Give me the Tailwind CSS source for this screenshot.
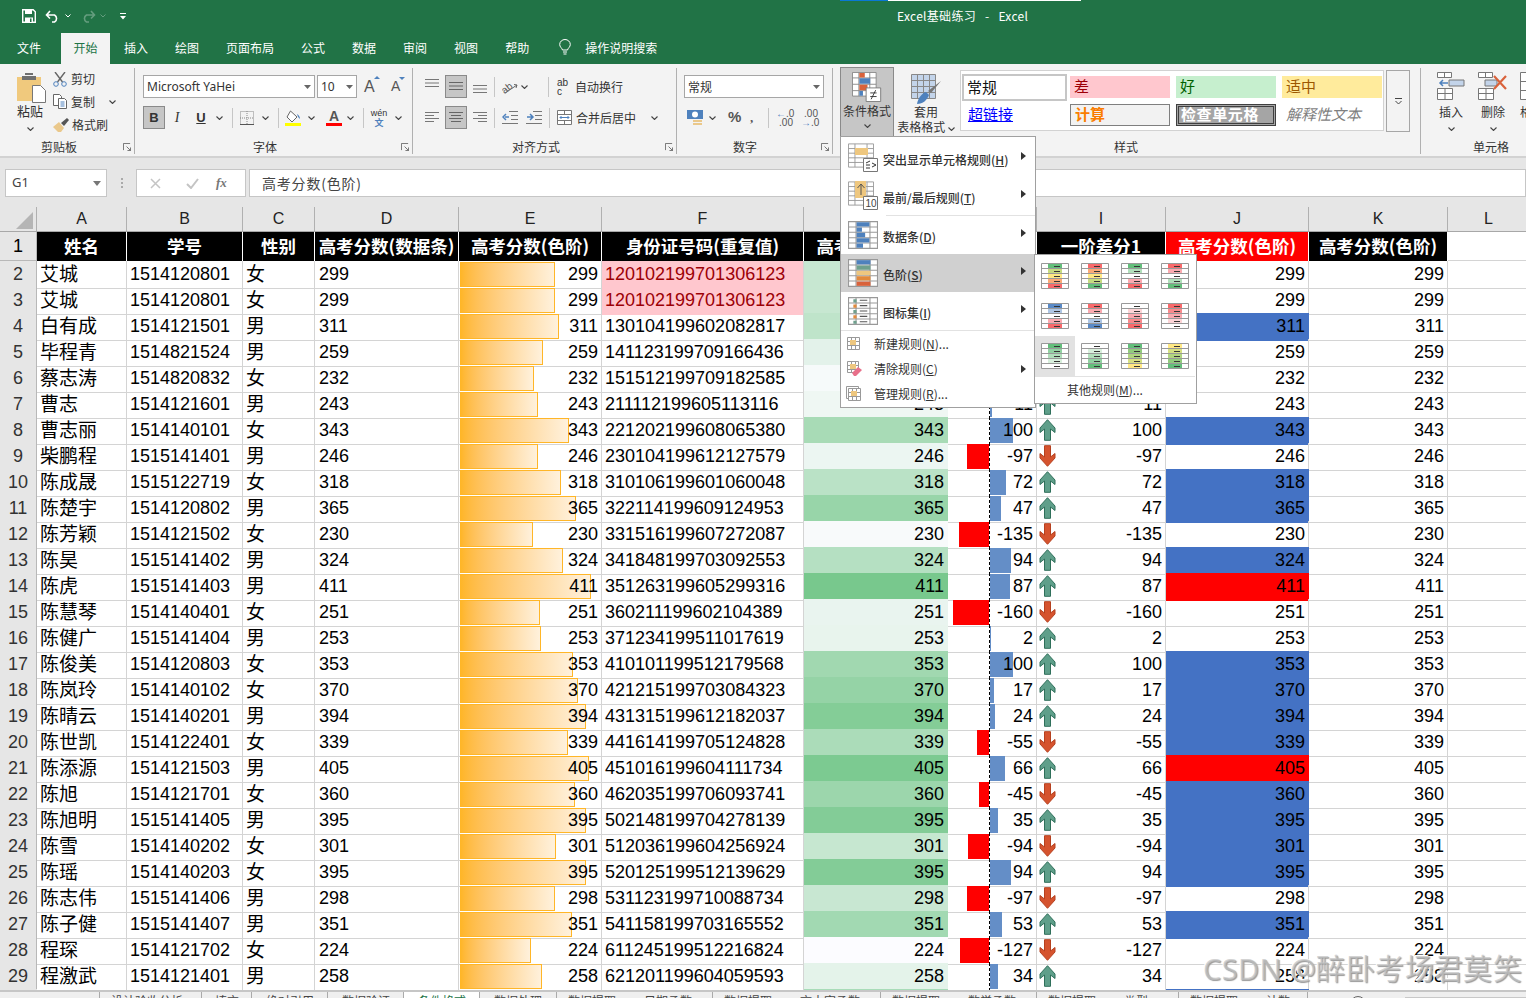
<!DOCTYPE html>
<html lang="zh-CN">

<head>
  <meta charset="UTF-8" />
  <meta name="viewport" content="width=device-width, initial-scale=1.0" />
  <script src="https://cdn.jsdelivr.net/npm/@tailwindcss/browser@4"></script>
  <title>Excel基础练习 - Excel</title>
</head>

<body class="relative w-[1526px] h-[998px] overflow-hidden bg-white text-[12px] text-[#333] font-['Noto_Sans_CJK_SC',sans-serif]">
  <!-- shared small icons -->
  <svg class="hidden">
    <symbol id="chev" viewBox="0 0 7 4"><path d="M.5.5 3.5 3.5 6.5.5" fill="none" stroke="#444" stroke-width="1.1" /></symbol>
    <symbol id="launcher" viewBox="0 0 9 9"><path d="M.5 8V.5H8M4 4l4.500 4.500M8.500 5v3.500H5" fill="none" stroke="#666" /></symbol>
    <symbol id="tri" viewBox="0 0 5 8"><path d="M0 0l5 4-5 4z" fill="#333" /></symbol>
    <symbol id="grid" viewBox="0 0 28 26"><path d="M.5.5h27v25H.5zM.5 5.500h27M.5 10.500h27M.5 15.500h27M.5 20.500h27M7.500.5v25M20.500.5v25" fill="#fff" stroke="#999" /></symbol>
    <symbol id="upa" viewBox="0 0 16 22"><path d="M8 .7l7.500 8.300v4.500L11 10v11.300H5V10L.5 13.500V9z" fill="#5f9f8a" stroke="#2f6f5a" /></symbol>
    <symbol id="downa" viewBox="0 0 16 22"><path d="M5 .7h6V12l4.500-3.500V13L8 21.300.5 13V8.500L5 12z" fill="#d5532e" stroke="#b5401f" /></symbol>
  </svg>

  <!-- Title bar -->
  <header class="bg-[#217346] h-[64px] text-white">
    <div class="flex items-center h-[33px] pb-px">
      <div class="flex items-center w-[897px] pl-[22px]">
        <svg width="14" height="14" viewBox="0 0 14 14"><path d="M.7.7h10.500l2.100 2.100v10.500H.7z" fill="none" stroke="#fff" stroke-width="1.400" /><path d="M3 1h7v4H3zM3 8.500h8V13H3z" fill="#fff" /><path d="M8 9.500h1.500V13H8z" fill="#217346" /></svg>
        <svg class="ml-[9px]" width="16" height="14" viewBox="0 0 16 14"><path d="M1.500 6h8a4 4 0 0 1 0 7H7M5 2 1.500 6 5 9.500" fill="none" stroke="#fff" stroke-width="1.600" /></svg>
        <svg class="ml-[4px]" width="6" height="4"><path d="M.5.5 3 3 5.500.5" stroke="#fff" fill="none" /></svg>
        <svg class="ml-[9px] opacity-30" width="16" height="14" viewBox="0 0 16 14"><path d="M14.500 6h-8a4 4 0 0 0 0 7H9M11 2l3.500 4L11 9.500" fill="none" stroke="#fff" stroke-width="1.600" /></svg>
        <svg class="ml-[4px] opacity-30" width="6" height="4"><path d="M.5.5 3 3 5.500.5" stroke="#fff" fill="none" /></svg>
        <svg class="ml-[14px]" width="6" height="7" viewBox="0 0 6 7"><path d="M0 0h6v1H0zM0 3h6L3 6.500z" fill="#fff" /></svg>
      </div>
      <span class="text-[12px] tracking-[0.3px] whitespace-pre">Excel基础练习   -   Excel</span>
    </div>
    <nav class="flex items-center h-[29px]">
      <a class="ml-[17px]">文件</a>
      <a class="flex items-center justify-center self-start ml-[20px] w-[49px] h-[31px] pb-[2px] bg-[#f3f3f3] text-[#217346]">开始</a>
      <div class="flex items-center ml-[14px] gap-[27px]">
        <a>插入</a><a>绘图</a><a>页面布局</a><a>公式</a><a>数据</a><a>审阅</a><a>视图</a><a>帮助</a>
      </div>
      <svg class="ml-[30px]" width="12" height="17" viewBox="0 0 12 17"><path d="M3.500 11C3 9 .7 8 .7 5.500a5.300 5 0 0 1 10.600 0C11.300 8 9 9 8.500 11zM4 13h4M4.500 15h3" fill="none" stroke="#fff" /></svg>
      <span class="ml-[14px]">操作说明搜索</span>
    </nav>
  </header>

  <!-- Ribbon -->
  <div class="flex h-[94px] pt-[4px] bg-[#f3f3f3] border-b-2 border-[#d2d2d2]">
    <!-- 剪贴板 -->
    <section class="flex flex-col w-[135px] h-[86px] border-r border-[#b0b0b0]">
      <div class="flex h-[70px]">
        <div class="flex flex-col items-start pl-[17px] w-[53px]">
          <svg class="mt-[4px]" width="29" height="31" viewBox="0 0 29 31"><path d="M0 5h24v24H0z" fill="#f0c97d" /><path d="M8 3h8V1h-8zM5 4h14v4H5z" fill="#6f6f6f" /><path d="M15.500 13.500h8l5 5v12h-13z" fill="#fff" stroke="#777" /></svg>
          <span class="text-[13px] leading-[16px]">粘贴</span>
          <svg class="ml-[10px] mt-[8px]" width="7" height="4"><use href="#chev" /></svg>
        </div>
        <div class="flex flex-col">
          <div class="flex items-center h-[22px]">
            <svg width="14" height="15" viewBox="0 0 14 15"><path d="M2 0l7.500 10M12 0 4.500 10" stroke="#666" stroke-width="1.400" fill="none" /><circle cx="3" cy="12" r="2.300" fill="none" stroke="#4e81bd" /><circle cx="11" cy="12" r="2.300" fill="none" stroke="#4e81bd" /></svg>
            <span class="ml-[4px]">剪切</span>
          </div>
          <div class="flex items-center h-[23px]">
            <svg width="14" height="15" viewBox="0 0 14 15"><path d="M.5.5h6l2 2v9H.5z" fill="#fff" stroke="#666" /><path d="M5.500 4.500h6l2 2v8h-8z" fill="#fff" stroke="#666" /><path d="M7.500 8h4M7.500 10h4M7.500 12h4" stroke="#4e81bd" /></svg>
            <span class="ml-[4px]">复制</span>
            <svg class="ml-[14px]" width="7" height="4"><use href="#chev" /></svg>
          </div>
          <div class="flex items-center h-[23px]">
            <svg width="16" height="14" viewBox="0 0 16 14"><path d="M0 9l6-5 5 6-3 4H5z" fill="#eac88b" /><path d="M8 5l6-5 2 2-5 6z" fill="#555" /></svg>
            <span class="ml-[3px]">格式刷</span>
          </div>
        </div>
      </div>
      <div class="flex items-center h-[16px] pt-[2px]">
        <span class="ml-[41px]">剪贴板</span>
        <svg class="ml-auto mr-[3px]" width="8" height="8"><use href="#launcher" /></svg>
      </div>
    </section>

    <!-- 字体 -->
    <section class="flex flex-col w-[278px] h-[86px] border-r border-[#b0b0b0]">
      <div class="h-[70px] pl-[8px] pt-[7px]">
        <div class="flex items-center h-[23px]">
          <div class="flex items-center justify-between w-[172px] h-[23px] px-[3px] bg-white border border-[#a6a6a6] font-['Noto_Sans',sans-serif]">Microsoft YaHei
            <svg width="7" height="4" viewBox="0 0 7 4"><path d="M0 0h7L3.500 4z" fill="#666" /></svg>
          </div>
          <div class="flex items-center justify-between ml-[2px] w-[40px] h-[23px] px-[3px] bg-white border border-[#a6a6a6] font-['Noto_Sans',sans-serif]">10
            <svg width="7" height="4" viewBox="0 0 7 4"><path d="M0 0h7L3.500 4z" fill="#666" /></svg>
          </div>
          <div class="relative ml-[7px] w-[18px] text-[16px] text-[#555] font-['Liberation_Sans']">A<span class="absolute top-[1px] left-[10px] w-0 h-0 border-x-[3px] border-b-[3px] border-x-transparent border-b-[#4e81bd]"></span></div>
          <div class="relative ml-[9px] w-[16px] text-[14px] text-[#555] font-['Liberation_Sans']">A<span class="absolute top-[1px] left-[8px] w-0 h-0 border-x-[3px] border-t-[3px] border-x-transparent border-t-[#4e81bd]"></span></div>
        </div>
        <div class="flex items-center h-[23px] mt-[8px]">
          <div class="flex items-center justify-center w-[22px] h-[23px] bg-[#c6c6c6] border border-[#8a8a8a] font-bold font-['Liberation_Sans'] text-[13px]">B</div>
          <div class="w-[24px] text-center font-['Liberation_Serif'] italic text-[14px]">I</div>
          <div class="w-[24px] text-center font-bold font-['Liberation_Sans'] text-[13px] underline">U</div>
          <div class="flex justify-center w-[12px]"><svg width="7" height="4"><use href="#chev" /></svg></div>
          <div class="ml-[7px] w-px h-[20px] bg-[#c6c6c6]"></div>
          <div class="flex justify-center w-[28px]"><svg width="14" height="14" viewBox="0 0 14 14"><path d="M.5.5h13v13H.5z" fill="none" stroke="#888" stroke-dasharray="1 1" /><path d="M7 0v14M0 7h14" stroke="#888" stroke-dasharray="1 1" /><path d="M0 13.500h14" stroke="#555" /></svg></div>
          <div class="flex justify-center w-[8px]"><svg width="7" height="4"><use href="#chev" /></svg></div>
          <div class="ml-[9px] w-px h-[20px] bg-[#c6c6c6]"></div>
          <div class="flex justify-center w-[28px]"><svg width="16" height="16" viewBox="0 0 16 16"><path d="M5.500 1 12 7l-5 5-5-5z" fill="#fff" stroke="#666" /><path d="M12 4c2 1 3 3 3 5l-2-2z" fill="#4e81bd" /><path d="M0 13h16v3H0z" fill="#ffff00" /></svg></div>
          <div class="flex justify-center w-[8px]"><svg width="7" height="4"><use href="#chev" /></svg></div>
          <div class="flex flex-col items-center ml-[7px] w-[24px] relative">
            <span class="font-bold font-['Liberation_Sans'] text-[14px] leading-[13px] text-[#555]">A</span>
            <span class="w-[16px] h-[3px] bg-[#ff0000]"></span>
          </div>
          <div class="flex justify-center w-[8px]"><svg width="7" height="4"><use href="#chev" /></svg></div>
          <div class="ml-[9px] w-px h-[20px] bg-[#c6c6c6]"></div>
          <div class="flex flex-col items-center w-[30px] text-[9px] leading-[9px] font-['Liberation_Sans']">wén<span class="text-[#4e81bd] font-['Noto_Sans_CJK_SC'] font-bold">文</span></div>
          <div class="flex justify-center w-[8px]"><svg width="7" height="4"><use href="#chev" /></svg></div>
        </div>
      </div>
      <div class="flex items-center h-[16px] pt-[2px]">
        <span class="ml-[118px]">字体</span>
        <svg class="ml-auto mr-[3px]" width="8" height="8"><use href="#launcher" /></svg>
      </div>
    </section>

    <!-- 对齐方式 -->
    <section class="flex flex-col w-[264px] h-[86px] border-r border-[#b0b0b0]">
      <div class="h-[70px] pl-[12px] pt-[7px]">
        <div class="flex items-center h-[23px]">
          <div class="w-[20px]"><svg width="14" height="9" viewBox="0 0 14 9" class="-mt-[6px]"><path d="M0 .5h14M0 4h14M0 7.500h14" stroke="#777" /></svg></div>
          <div class="flex items-center justify-center w-[22px] h-[23px] bg-[#c6c6c6] border border-[#8a8a8a]"><svg width="14" height="9" viewBox="0 0 14 9"><path d="M0 .5h14M0 4h14M0 7.500h14" stroke="#666" /></svg></div>
          <div class="w-[14px] ml-[6px]"><svg width="14" height="9" viewBox="0 0 14 9" class="mt-[6px]"><path d="M0 .5h14M0 4h14M0 7.500h14" stroke="#777" /></svg></div>
          <div class="ml-[7px] w-px h-[20px] bg-[#c6c6c6]"></div>
          <svg class="ml-[7px]" width="16" height="16" viewBox="0 0 16 16"><text x="0" y="12" transform="rotate(-38 6 10)" font-size="10" fill="#555" font-family="Liberation Sans">ab</text><path d="M3 14 15 6M12 5.500l3 .5-1 3" stroke="#666" fill="none" /></svg>
          <svg class="ml-[3px]" width="7" height="4"><use href="#chev" /></svg>
          <div class="ml-[20px] w-px h-[20px] bg-[#c6c6c6]"></div>
          <div class="ml-[8px] w-[14px] text-[10px] leading-[9px] font-['Liberation_Sans']">ab<br />c</div>
          <span class="ml-[4px]">自动换行</span>
        </div>
        <div class="flex items-center h-[23px] mt-[8px]">
          <div class="w-[20px]"><svg width="14" height="11" viewBox="0 0 14 11"><path d="M0 .5h14M0 3.500h9M0 6.500h14M0 9.500h9" stroke="#777" /></svg></div>
          <div class="flex items-center justify-center w-[22px] h-[23px] bg-[#c6c6c6] border border-[#8a8a8a]"><svg width="14" height="11" viewBox="0 0 14 11"><path d="M0 .5h14M2 3.500h10M0 6.500h14M2 9.500h10" stroke="#666" /></svg></div>
          <div class="w-[14px] ml-[6px]"><svg width="14" height="11" viewBox="0 0 14 11"><path d="M0 .5h14M5 3.500h9M0 6.500h14M5 9.500h9" stroke="#777" /></svg></div>
          <div class="ml-[7px] w-px h-[20px] bg-[#c6c6c6]"></div>
          <svg class="ml-[7px]" width="16" height="13" viewBox="0 0 16 13"><path d="M7 .5h9M9 4.500h7M9 8.500h7M0 12.500h16" stroke="#777" /><path d="M7 6H3M4 3 1 6l3 3" stroke="#4e81bd" stroke-width="1.500" fill="none" /></svg>
          <svg class="ml-[8px]" width="16" height="13" viewBox="0 0 16 13"><path d="M7 .5h9M9 4.500h7M9 8.500h7M0 12.500h16" stroke="#777" /><path d="M1 6h5M4 3l3 3-3 3" stroke="#4e81bd" stroke-width="1.500" fill="none" /></svg>
          <div class="ml-[7px] w-px h-[20px] bg-[#c6c6c6]"></div>
          <svg class="ml-[7px]" width="15" height="15" viewBox="0 0 15 15"><path d="M.5.5h14v14H.5zM.5 4.500h14M.5 10.500h14M7.500.5v4M7.500 10.500v4" fill="#fff" stroke="#777" /><path d="M3 7.500h9M4.500 6 3 7.500 4.500 9M10.500 6 12 7.500 10.500 9" stroke="#4e81bd" fill="none" /></svg>
          <span class="ml-[4px]">合并后居中</span>
          <svg class="ml-[15px]" width="7" height="4"><use href="#chev" /></svg>
        </div>
      </div>
      <div class="flex items-center h-[16px] pt-[2px]">
        <span class="ml-[99px]">对齐方式</span>
        <svg class="ml-auto mr-[3px]" width="8" height="8"><use href="#launcher" /></svg>
      </div>
    </section>

    <!-- 数字 -->
    <section class="flex flex-col w-[156px] h-[86px] border-r border-[#b0b0b0]">
      <div class="h-[70px] pl-[7px] pt-[7px]">
        <div class="flex items-center justify-between w-[140px] h-[23px] px-[3px] bg-white border border-[#a6a6a6]">常规
          <svg width="7" height="4" viewBox="0 0 7 4"><path d="M0 0h7L3.500 4z" fill="#666" /></svg>
        </div>
        <div class="flex items-center h-[23px] mt-[8px] text-[#555]">
          <svg class="ml-[3px]" width="16" height="16" viewBox="0 0 16 16"><path d="M0 0h16v9H0z" fill="#4e81bd" /><circle cx="8" cy="4.500" r="3" fill="#fff" /><path d="M6 10h9v2H6zM6 13h9v2H6z" fill="#eac88b" /></svg>
          <svg class="ml-[6px]" width="7" height="4"><use href="#chev" /></svg>
          <span class="ml-[12px] w-[13px] font-bold text-[15px] font-['Liberation_Sans']">%</span>
          <span class="ml-[9px] w-[5px] font-bold text-[13px] font-['Liberation_Serif']">,</span>
          <div class="ml-[13px] w-px h-[20px] bg-[#c6c6c6]"></div>
          <div class="ml-[7px] w-[17px] text-[10px] leading-[9px] font-['Liberation_Sans'] text-right"><span class="text-[#4e81bd]">←</span>.0<br />.00</div>
          <div class="ml-[8px] w-[17px] text-[10px] leading-[9px] font-['Liberation_Sans'] text-right">.00<br /><span class="text-[#4e81bd]">→</span>.0</div>
        </div>
      </div>
      <div class="flex items-center h-[16px] pt-[2px]">
        <span class="ml-[56px]">数字</span>
        <svg class="ml-auto mr-[3px]" width="8" height="8"><use href="#launcher" /></svg>
      </div>
    </section>

    <!-- 样式 -->
    <section class="flex flex-col w-[588px] h-[86px] border-r border-[#b0b0b0]">
      <div class="flex h-[70px] pl-[7px]">
        <div class="flex flex-col items-center w-[54px] h-[70px] -mt-[1px] bg-[#c6c6c6] border border-[#8a8a8a]">
          <svg class="mt-[4px]" width="31" height="30" viewBox="0 0 34 33"><path d="M.5.5h26v26H.5zM.5 6.500h26M.5 13.500h26M.5 20.500h26M7.500.5v26M19.500.5v26" fill="#fff" stroke="#888" /><path d="M8 1h6v5H8zM8 14h9v6H8z" fill="#d9623b" /><path d="M8 7h12v6H8zM8 21h4v5H8z" fill="#4e81bd" /><path d="M15.500 17.500h16v15h-16z" fill="#fff" stroke="#777" /><path d="M20 23h7M20 27h7M26 20l-5 10" stroke="#333" fill="none" /></svg>
          <span class="mt-px leading-[16px]">条件格式</span>
          <svg class="mt-[5px]" width="7" height="4"><use href="#chev" /></svg>
        </div>
        <div class="flex flex-col items-center w-[64px] pt-[6px]">
          <svg width="30" height="30" viewBox="0 0 30 30"><path d="M.5.5h24v24H.5z" fill="#c3d4ea" stroke="#888" /><path d="M.5 6.500h24M.5 12.500h24M.5 18.500h24M6.500.5v24M12.500.5v24M18.500.5v24" stroke="#888" fill="none" /><path d="M30 7 20 19l-3-2z" fill="#777" /><path d="M6 30c1-6 5-11 9-12l3 3c-2 5-6 9-12 9z" fill="#4e81bd" /></svg>
          <span class="leading-[15px]">套用</span>
          <span class="leading-[15px] whitespace-nowrap">表格格式 <svg class="inline" width="7" height="4"><use href="#chev" /></svg></span>
        </div>
        <div class="grid grid-cols-[109px_106px_106px_101px] grid-rows-[32px_24px] content-start items-center w-[424px] h-[61px] ml-[2px] mt-[2px] bg-white border border-[#d2d2d2] text-[15px]">
          <div class="flex items-center h-[27px] ml-[1px] mr-[3px] px-[3px] bg-white border-2 border-[#c6c6c6] text-[#111]">常规</div>
          <div class="flex items-center h-[22px] mr-[6px] px-[4px] pb-[2px] bg-[#ffc7ce] text-[#9c0006]">差</div>
          <div class="flex items-center h-[22px] mr-[6px] px-[4px] pb-[2px] bg-[#c6efce] text-[#006100]">好</div>
          <div class="flex items-center h-[22px] mr-[1px] px-[4px] pb-[2px] bg-[#ffeb9c] text-[#9c5700]">适中</div>
          <div class="pl-[7px] pb-[2px] text-[#0000ff] underline">超链接</div>
          <div class="flex items-center h-[22px] mr-[6px] px-[4px] pb-[2px] bg-[#f2f2f2] border border-[#7f7f7f] text-[#fa7d00] font-bold">计算</div>
          <div class="flex items-center h-[22px] mr-[6px] px-[2px] pb-[2px] bg-[#a5a5a5] border-[3px] border-double border-[#3f3f3f] text-white font-bold tracking-[0.6px]">检查单元格</div>
          <div class="pl-[4px] pb-[2px] text-[#7f7f7f] italic text-[15px]">解释性文本</div>
        </div>
        <div class="flex items-center justify-center ml-[2px] mt-[2px] w-[24px] h-[62px] bg-[#f3f3f3] border border-[#a6a6a6]">
          <svg width="7" height="7" viewBox="0 0 7 7"><path d="M0 .5h7M.5 3l3 3 3-3" fill="none" stroke="#444" /></svg>
        </div>
      </div>
      <div class="flex items-center h-[16px] pt-[2px]">
        <span class="ml-[281px]">样式</span>
      </div>
    </section>

    <!-- 单元格 -->
    <section class="flex flex-col flex-1 h-[86px] overflow-hidden">
      <div class="flex h-[70px] pl-[16px] pt-[4px]">
        <div class="flex flex-col items-center w-[28px]">
          <svg width="28" height="28" viewBox="0 0 28 28"><path d="M.5.5h14v5H.5zM7.500.5v5M.5 16.500h15v11H.5zM.5 21.500h15M8 16.500v11" fill="#fff" stroke="#777" /><path d="M12 8h15v6H12z" fill="#c3d4ea" stroke="#777" /><path d="M11 11H3M6 8l-3 3 3 3" stroke="#4e81bd" stroke-width="1.500" fill="none" /></svg>
          <span class="mt-[3px]">插入</span>
          <svg class="mt-[6px]" width="7" height="4"><use href="#chev" /></svg>
        </div>
        <div class="flex flex-col items-center ml-[13px] w-[30px]">
          <svg width="30" height="28" viewBox="0 0 30 28"><path d="M.5.5h14v5H.5zM7.500.5v5M.5 16.500h15v11H.5zM.5 21.500h15M8 16.500v11" fill="#fff" stroke="#777" /><path d="M7 8h12v6H7z" fill="#c3d4ea" stroke="#777" /><path d="M16 4l12 13M28 4 16 17" stroke="#d9623b" stroke-width="2.200" /></svg>
          <span class="mt-[3px]">删除</span>
          <svg class="mt-[6px]" width="7" height="4"><use href="#chev" /></svg>
        </div>
        <div class="flex flex-col items-start ml-[12px]">
          <svg width="28" height="28" viewBox="0 0 28 28"><path d="M.5.5h14v27H.5zM.5 9.500h14M.5 18.500h14" fill="#fff" stroke="#777" /></svg>
          <span class="mt-[3px]">格</span>
        </div>
      </div>
      <div class="flex items-center h-[16px] pt-[2px]">
        <span class="ml-[52px]">单元格</span>
      </div>
    </section>
  </div>

  <!-- Formula bar -->
  <div class="flex items-start h-[49px] pt-[11px] bg-[#e6e6e6]">
    <div class="flex items-center justify-between ml-[5px] w-[102px] h-[28px] pl-[6px] pr-[5px] bg-white border border-[#c6c6c6] text-[13px] text-[#444] font-['Noto_Sans',sans-serif]">G1
      <svg width="8" height="5" viewBox="0 0 8 5"><path d="M0 0h8L4 5z" fill="#777" /></svg>
    </div>
    <div class="flex flex-col gap-[2px] ml-[14px] mt-[9px] w-[2px]"><i class="w-[2px] h-[2px] bg-[#aaa]"></i><i class="w-[2px] h-[2px] bg-[#aaa]"></i><i class="w-[2px] h-[2px] bg-[#aaa]"></i></div>
    <div class="flex items-center ml-[13px] w-[110px] h-[28px] pl-[13px] bg-white border border-[#c6c6c6]">
      <svg width="11" height="11" viewBox="0 0 11 11"><path d="M1 1l9 9M10 1l-9 9" stroke="#c4c4c4" stroke-width="1.500" /></svg>
      <svg class="ml-[25px]" width="13" height="11" viewBox="0 0 13 11"><path d="M1 6l4 4 7-9" fill="none" stroke="#c4c4c4" stroke-width="2" /></svg>
      <span class="ml-[17px] font-['Liberation_Serif'] italic font-bold text-[13px] text-[#777]">fx</span>
    </div>
    <div class="flex items-center flex-1 ml-[3px] h-[28px] pl-[12px] bg-white border border-[#c6c6c6] text-[14px] tracking-[0.8px] text-[#444]">高考分数(色阶)</div>
  </div>

  <!-- Sheet -->
  <div id="sheet" class="h-[783px] overflow-hidden"></div>

  <!-- Sheet tabs -->
  <div class="flex h-[8px] overflow-hidden bg-[#efefef] border-t-2 border-[#c6c6c6] text-[12px] text-[#444]">
    <div class="w-[100px] shrink-0 border-r border-[#aaa]"></div>
    <div class="w-[102px] shrink-0 pl-[11px] border-r border-[#aaa]">设计验收分析</div>
    <div class="w-[50px] shrink-0 pl-[13px] border-r border-[#aaa]">填充</div>
    <div class="w-[76px] shrink-0 pl-[14px] border-r border-[#aaa]">绝对引用</div>
    <div class="w-[76px] shrink-0 pl-[14px] border-r border-[#aaa]">数据验证</div>
    <div class="w-[76px] shrink-0 pl-[14px] bg-white text-[#217346] border-r border-[#aaa]">条件格式</div>
    <div class="w-[77px] shrink-0 pl-[14px] border-r border-[#aaa]">数据处理</div>
    <div class="w-[156px] shrink-0 pl-[11px] border-r border-[#aaa]">数据提取<span class="ml-[28px]">日期函数</span></div>
    <div class="w-[168px] shrink-0 pl-[11px] border-r border-[#aaa]">数据提取<span class="ml-[28px]">文本字函数</span></div>
    <div class="w-[156px] shrink-0 pl-[11px] border-r border-[#aaa]">数据提取<span class="ml-[28px]">数学函数</span></div>
    <div class="w-[142px] shrink-0 pl-[11px] border-r border-[#aaa]">数据提取<span class="ml-[28px]">类型+</span></div>
    <div class="w-[129px] shrink-0 pl-[11px] border-r border-[#aaa]">数据提取<span class="ml-[28px]">计数</span></div>
    <div class="ml-[42px] w-[16px] h-[16px] shrink-0 mt-[4px] rounded-full border border-[#666]"></div>
    <div class="ml-[39px] flex-1 mt-[5px] h-[4px] bg-[#c8c8c8]"></div>
  </div>

  <!-- 条件格式 menu -->
  <div class="absolute left-[840px] top-[136px] w-[196px] h-[272px] pt-[2px] bg-white border border-[#a0a0a0]">
    <div class="flex items-center h-[38px] pl-[7px]">
      <svg width="30" height="30" viewBox="0 0 30 30"><use href="#grid" width="26" height="25" /><path d="M7 5h13v7H7z" fill="#eec77f" /><path d="M15.500 15.500h14v13h-14z" fill="#fff" stroke="#777" /><path d="M18 20l4-2M18 22h4M18 25h4M24 20l4 2-4 2" stroke="#333" fill="none" /></svg>
      <span class="ml-[5px] pt-[3px] font-medium whitespace-nowrap">突出显示单元格规则(<u>H</u>)</span>
      <svg class="ml-auto mr-[9px] -mt-[4px]" width="5" height="8"><use href="#tri" /></svg>
    </div>
    <div class="flex items-center h-[38px] pl-[7px]">
      <svg width="30" height="30" viewBox="0 0 30 30"><use href="#grid" width="26" height="25" /><path d="M7 0h11v17H7z" fill="#eec77f" /><path d="M13 14V3M9.500 7 13 3l3.500 4" stroke="#555" fill="none" /><path d="M15.500 15.500h14v13h-14z" fill="#fff" stroke="#777" /><text x="17.500" y="26" font-size="10" fill="#444" font-family="Liberation Sans">10</text></svg>
      <span class="ml-[5px] pt-[3px] font-medium whitespace-nowrap">最前/最后规则(<u>T</u>)</span>
      <svg class="ml-auto mr-[9px] -mt-[4px]" width="5" height="8"><use href="#tri" /></svg>
    </div>
    <div class="h-px ml-[45px] bg-[#e2e2e2]"></div>
    <div class="flex items-center h-[38px] pl-[7px]">
      <svg width="30" height="28" viewBox="0 0 28 26"><use href="#grid" /><path d="M8 1h12v4H8zM8 11h8v4H8zM8 16h12v4H8z" fill="#4e81bd" /><path d="M8 6h5v4H8zM8 21h6v4H8z" fill="#4e81bd" /></svg>
      <span class="ml-[5px] pt-[3px] font-medium">数据条(<u>D</u>)</span>
      <svg class="ml-auto mr-[9px] -mt-[4px]" width="5" height="8"><use href="#tri" /></svg>
    </div>
    <div class="flex items-center h-[38px] pl-[7px] bg-[#d0d0d0]">
      <svg width="30" height="28" viewBox="0 0 28 26"><use href="#grid" /><path d="M8 1h13v4H8z" fill="#4e81bd" /><path d="M8 6h13v4H8z" fill="#6fa08d" /><path d="M8 11h13v4H8z" fill="#eec77f" /><path d="M8 16h13v4H8z" fill="#e28a3c" /><path d="M8 21h13v4H8z" fill="#d9623b" /></svg>
      <span class="ml-[5px] pt-[3px] font-medium">色阶(<u>S</u>)</span>
      <svg class="ml-auto mr-[9px] -mt-[4px]" width="5" height="8"><use href="#tri" /></svg>
    </div>
    <div class="flex items-center h-[38px] pl-[7px]">
      <svg width="30" height="28" viewBox="0 0 28 26"><use href="#grid" /><path d="M5 2h3v3H5zM5 12h3v3H5zM5 22h3v3H5z" fill="#6fa08d" /><path d="M5 7h3v3H5zM5 17h3v3H5z" fill="#e28a3c" /><path d="M11 3h7M11 8h7M11 13h7M11 18h7M11 23h7" stroke="#555" /></svg>
      <span class="ml-[5px] pt-[3px] font-medium">图标集(<u>I</u>)</span>
      <svg class="ml-auto mr-[9px] -mt-[4px]" width="5" height="8"><use href="#tri" /></svg>
    </div>
    <div class="h-px bg-[#e2e2e2]"></div>
    <div class="flex items-center h-[25px] pl-[6px]">
      <svg width="13" height="13" viewBox="0 0 13 13"><path d="M.5.5h12v12H.5zM4.500.5v12M8.500.5v12M.5 4.500h12M.5 8.500h12" fill="#fff" stroke="#999" /><path d="M3 3h6v5H3z" fill="#eec77f" /></svg>
      <span class="ml-[14px]">新建规则(<u>N</u>)...</span>
    </div>
    <div class="flex items-center h-[25px] pl-[6px]">
      <svg width="15" height="15" viewBox="0 0 15 15"><path d="M.5.5h11v11H.5zM4.500.5v11M8.500.5v11M.5 4.500h11M.5 8.500h11" fill="#fff" stroke="#999" /><path d="M3 3h6v5H3z" fill="#eec77f" /><path d="M5 12l6-6 4 3-6 6H7z" fill="#e8708a" /></svg>
      <span class="ml-[12px]">清除规则(<u>C</u>)</span>
      <svg class="ml-auto mr-[9px]" width="5" height="8"><use href="#tri" /></svg>
    </div>
    <div class="flex items-center h-[25px] pl-[5px]">
      <svg width="15" height="15" viewBox="0 0 15 15"><path d="M.5.5h12v12H.5z" fill="#fff" stroke="#999" /><path d="M2.500 2.500h12v12h-12zM6.500 2.500v12M10.500 2.500v12M2.500 6.500h12M2.500 10.500h12" fill="#fff" stroke="#999" /><path d="M5 5h6v5H5z" fill="#eec77f" /></svg>
      <span class="ml-[13px]">管理规则(<u>R</u>)...</span>
    </div>
  </div>

  <!-- 色阶 submenu -->
  <div class="absolute left-[1034px] top-[254px] w-[163px] h-[150px] pt-px bg-white border border-[#a0a0a0]">
    <div id="scales" class="grid grid-cols-[40px_40px_40px_40px] auto-rows-[40px] border-b border-[#e2e2e2] w-[160px]"></div>
    <div class="flex items-center h-[26px] ml-[32px]">其他规则(<u>M</u>)...</div>
  </div>

  <!-- thin strip on the window's top edge -->
  <div class="absolute top-0 left-[840px] flex h-px">
    <div class="w-[48px] bg-[#0a78d4]"></div>
    <div class="w-[193px] bg-white"></div>
  </div>

  <!-- watermark -->
  <div class="absolute left-[1203px] top-[949px] text-[29px] leading-[40px] tracking-[0.4px] whitespace-nowrap text-[#c4c4c4]/70 [text-shadow:1px_1px_1px_#999,-1px_-1px_0_#fff] font-['Noto_Sans',sans-serif]">CSDN @醉卧考场君莫笑</div>

  <script>
    // name, student no, gender, score, id card
    const rows = [
      ['艾城', '1514120801', '女', 299, '120102199701306123'],
      ['艾城', '1514120801', '女', 299, '120102199701306123'],
      ['白有成', '1514121501', '男', 311, '130104199602082817'],
      ['毕程青', '1514821524', '男', 259, '141123199709166436'],
      ['蔡志涛', '1514820832', '女', 232, '151512199709182585'],
      ['曹志', '1514121601', '男', 243, '211112199605113116'],
      ['曹志丽', '1514140101', '女', 343, '221202199608065380'],
      ['柴鹏程', '1515141401', '男', 246, '230104199612127579'],
      ['陈成晟', '1515122719', '女', 318, '310106199601060048'],
      ['陈楚宇', '1514120802', '男', 365, '322114199609124953'],
      ['陈芳颖', '1514121502', '女', 230, '331516199607272087'],
      ['陈昊', '1515141402', '男', 324, '341848199703092553'],
      ['陈虎', '1515141403', '男', 411, '351263199605299316'],
      ['陈慧琴', '1514140401', '女', 251, '360211199602104389'],
      ['陈健广', '1515141404', '男', 253, '371234199511017619'],
      ['陈俊美', '1514120803', '女', 353, '410101199512179568'],
      ['陈岚玲', '1514140102', '女', 370, '421215199703084323'],
      ['陈晴云', '1514140201', '男', 394, '431315199612182037'],
      ['陈世凯', '1514122401', '女', 339, '441614199705124828'],
      ['陈添源', '1514121503', '男', 405, '451016199604111734'],
      ['陈旭', '1514121701', '女', 360, '462035199706093741'],
      ['陈旭明', '1515141405', '男', 395, '502148199704278139'],
      ['陈雪', '1514140202', '女', 301, '512036199604256924'],
      ['陈瑶', '1514140203', '女', 395, '520125199512139629'],
      ['陈志伟', '1515141406', '男', 298, '531123199710088734'],
      ['陈子健', '1515141407', '男', 351, '541158199703165552'],
      ['程琛', '1514121702', '女', 224, '611245199512216824'],
      ['程激武', '1514121401', '男', 258, '621201199604059593'],
    ]

    const gridCols = 'grid grid-cols-[37px_90px_116px_72px_144px_143px_202px_144px_89px_129px_143px_139px_82px]'
    const cell = 'flex items-center border-r border-b border-[#d4d4d4] overflow-hidden whitespace-nowrap'
    const num = 'justify-end pr-[3px]'
    const latin = "font-['Liberation_Sans','Noto_Sans_CJK_SC',sans-serif] text-[18px] text-black"
    const cjk = "pb-[2px] text-[19px] text-black"
    const hcell = 'flex items-center justify-center bg-black text-white font-bold text-[17.5px] border-r border-white whitespace-nowrap'

    const colHead = ['A', 'B', 'C', 'D', 'E', 'F', 'G', 'H', 'I', 'J', 'K', 'L']
    let html = `<div class="${gridCols} h-[25px] bg-[#e6e6e6] border-b border-[#a8a8a8]">
      <div class="relative border-r border-[#b0b0b0]"><svg class="absolute left-[16px] top-[5px]" width="17" height="17"><path d="M17 0v17H0z" fill="#b5b5b5" /></svg></div>
      ${colHead.map(c => `<div class="flex items-center justify-center border-r border-[#b0b0b0] text-[16px] text-[#222] font-['Liberation_Sans']">${c}</div>`).join('')}
    </div>`

    html += `<div class="${gridCols} h-[29px]">
      <div class="flex items-center justify-center bg-[#e6e6e6] border-r border-b border-[#b8b8b8] ${latin}">1</div>
      <div class="${hcell}">姓名</div><div class="${hcell}">学号</div><div class="${hcell}">性别</div>
      <div class="${hcell}">高考分数(数据条)</div><div class="${hcell}">高考分数(色阶)</div><div class="${hcell}">身份证号码(重复值)</div>
      <div class="${hcell}">高考分数(色阶)</div><div class="${hcell}">一阶差分</div><div class="${hcell}">一阶差分1</div>
      <div class="${hcell} !bg-[#ff0000]">高考分数(色阶)</div><div class="${hcell}">高考分数(色阶)</div>
      <div class="border-r border-b border-[#d4d4d4]"></div>
    </div>`

    rows.forEach((r, i) => {
      const [name, no, gender, score, idno] = r
      const diff = i === 0 ? 0 : score - rows[i - 1][3]
      const t = (score - 224) / 187
      const green = `rgb(${Math.round(252 - t * 132)},${Math.round(252 - t * 52)},${Math.round(255 - t * 114)})`
      const dup = i < 2
      const jFill = score >= 400 ? 'bg-[#ff0000] border-transparent' : score >= 300 ? 'bg-[#4472c4] border-transparent' : ''
      const barW = Math.abs(diff) * 0.225
      html += `<div class="${gridCols} h-[26px]">
        <div class="flex items-center justify-center bg-[#e6e6e6] border-r border-b border-[#b8b8b8] ${latin} !text-[#333]">${i + 2}</div>
        <div class="${cell} pl-[3px] ${cjk}">${name}</div>
        <div class="${cell} pl-[3px] ${latin}">${no}</div>
        <div class="${cell} pl-[3px] ${cjk}">${gender}</div>
        <div class="${cell} pl-[4px] ${latin}">${score}</div>
        <div class="${cell} ${num} relative ${latin}">
          <span class="absolute left-px top-[1px] bottom-[1px] bg-linear-to-r from-[#ffb628] to-[#fff1dc] border border-[#ffb628]" style="width:${Math.round(score * 0.319)}px"></span>
          <span class="relative">${score}</span>
        </div>
        <div class="${cell} pl-[3px] ${latin} ${dup ? '!text-[#9c0006] bg-[#ffc7ce] border-b-transparent' : ''}">${idno}</div>
        <div class="${cell} ${num} border-transparent ${latin}" style="background-color:${green}">${score}</div>
        <div class="${cell} ${num} relative ${latin}">
          <span class="absolute left-[41px] top-0 -bottom-px border-l border-dashed border-black"></span>
          ${diff >= 0
            ? `<span class="absolute left-[42px] top-[1px] bottom-[1px] bg-[#648ec7]" style="width:${barW}px"></span>`
            : `<span class="absolute right-[47px] top-[1px] bottom-[1px] bg-[#ff0000]" style="width:${barW}px"></span>`}
          <span class="relative">${diff}</span>
        </div>
        <div class="${cell} ${num} relative ${latin}">
          <svg class="absolute left-[2px] top-[2px]" width="17" height="22"><use href="${diff >= 0 ? '#upa' : '#downa'}" /></svg>
          ${diff}
        </div>
        <div class="${cell} ${num} ${latin} ${jFill}">${score}</div>
        <div class="${cell} ${num} ${latin}">${score}</div>
        <div class="border-r border-b border-[#d4d4d4]"></div>
      </div>`
    })

    // sliver of row 30 before the tab strip
    html += `<div class="${gridCols} h-[1px]">
      <div class="bg-[#e6e6e6]"></div><div></div><div></div><div></div><div></div><div></div><div></div>
      <div class="bg-[#a8dcb8]"></div><div></div><div></div><div class="bg-[#4472c4]"></div><div></div><div></div>
    </div>`
    document.getElementById('sheet').innerHTML = html

    // 色阶 gallery, top-left to bottom-right
    const scales = [
      ['#63be7b', '#c6db80', '#ffe884', '#fbaa77', '#f8696b'], ['#f8696b', '#fbaa77', '#ffe884', '#c6db80', '#63be7b'],
      ['#63be7b', '#b1dfbb', '#ffffff', '#fbaab0', '#f8696b'], ['#f8696b', '#fbaab0', '#ffffff', '#b1dfbb', '#63be7b'],
      ['#5a8ac6', '#aec6e4', '#ffffff', '#fbaab0', '#f8696b'], ['#f8696b', '#fbaab0', '#ffffff', '#aec6e4', '#5a8ac6'],
      ['#ffffff', '#fcd4d6', '#fbaab0', '#f98a8c', '#f8696b'], ['#f8696b', '#f98a8c', '#fbaab0', '#fcd4d6', '#ffffff'],
      ['#63be7b', '#92d2a2', '#b1dfbb', '#d8efdc', '#ffffff'], ['#ffffff', '#d8efdc', '#b1dfbb', '#92d2a2', '#63be7b'],
      ['#63be7b', '#92cb7d', '#b1d580', '#d5e082', '#ffe884'], ['#ffe884', '#d5e082', '#b1d580', '#92cb7d', '#63be7b'],
    ]
    document.getElementById('scales').innerHTML = scales.map((s, i) => `
      <div class="flex items-center justify-center ${i === 8 ? 'bg-[#e2e2e2]' : ''}">
        <svg width="28" height="26" viewBox="0 0 28 26">
          <use href="#grid" />
          ${s.map((c, j) => `<rect x="7" y="${j * 5 + 1}" width="14" height="4" fill="${c}" /><path d="M13 ${j * 5 + 3.5}h6" stroke="#333" />`).join('')}
        </svg>
      </div>`).join('')
  </script>
</body>
</html>
